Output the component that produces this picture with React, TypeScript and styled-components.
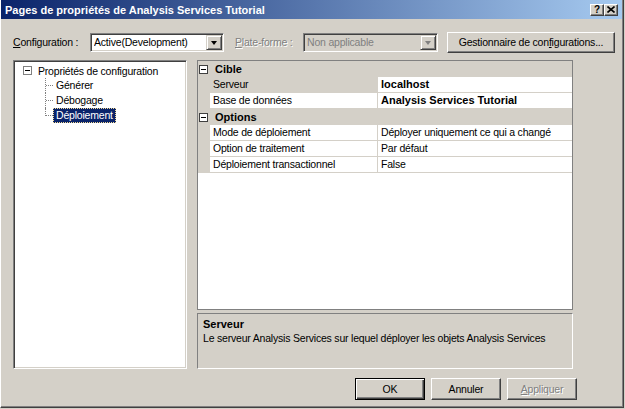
import styled, { createGlobalStyle, css } from "styled-components";

const GlobalStyle = createGlobalStyle`
  html, body {
    margin: 0;
    padding: 0;
    background: #d4d0c8;
  }
  body {
    font-family: "Liberation Sans", Arial, sans-serif;
    font-size: 10.5px;
    letter-spacing: -0.2px;
    color: #000;
  }
  * {
    box-sizing: border-box;
  }
`;

const Window = styled.div`
  width: 624px;
  height: 408px;
  background: #d4d0c8;
  border-left: 1px solid #ffffff;
  border-right: 1px solid #404040;
  border-bottom: 1px solid #404040;
  box-shadow: inset -1px -1px 0 #808080;
  display: flex;
  flex-direction: column;
`;

const TitleBar = styled.div`
  height: 19px;
  margin-right: 1px;
  padding: 0 4px;
  display: flex;
  align-items: center;
  background: linear-gradient(to right, #0a246a, #a6caf0);
`;

const Title = styled.div`
  flex: 1;
  color: #fff;
  font-weight: bold;
  font-size: 11px;
  letter-spacing: 0;
  white-space: nowrap;
`;

const CaptionButton = styled.div`
  width: 14px;
  height: 12px;
  background: #d4d0c8;
  border: 1px solid;
  border-color: #fff #404040 #404040 #fff;
  box-shadow: inset -1px -1px 0 #808080;
  display: flex;
  align-items: center;
  justify-content: center;
  font-weight: bold;
  font-size: 10px;
  letter-spacing: 0;
  line-height: 1;
`;

const Body = styled.div`
  flex: 1;
  padding: 12px 0 0 12px;
  display: flex;
  flex-direction: column;
`;

const ConfigRow = styled.div`
  height: 22px;
  display: flex;
  align-items: center;
`;

const Label = styled.span<{ $width: number; $disabled?: boolean }>`
  width: ${p => p.$width}px;
  flex: none;
  white-space: nowrap;
  ${p => p.$disabled && css`
    color: #808080;
    text-shadow: 1px 1px 0 #fff;
  `}
`;

const Accel = styled.span`
  text-decoration: underline;
`;

const Combo = styled.div<{ $width: number; $disabled?: boolean }>`
  width: ${p => p.$width}px;
  height: 19px;
  flex: none;
  display: flex;
  align-items: center;
  border: 1px solid;
  border-color: #808080 #fff #fff #808080;
  box-shadow: inset 1px 1px 0 #404040, inset -1px -1px 0 #d4d0c8;
  padding: 2px 2px 2px 3px;
  background: ${p => (p.$disabled ? "#d4d0c8" : "#fff")};
  color: ${p => (p.$disabled ? "#808080" : "#000")};
`;

const ComboText = styled.span`
  flex: 1;
  white-space: nowrap;
  overflow: hidden;
`;

const ComboArrow = styled.div<{ $disabled?: boolean }>`
  width: 16px;
  height: 15px;
  flex: none;
  background: #d4d0c8;
  border: 1px solid;
  border-color: #d4d0c8 #404040 #404040 #d4d0c8;
  box-shadow: inset 1px 1px 0 #fff, inset -1px -1px 0 #808080;
  display: flex;
  align-items: center;
  justify-content: center;
  margin-right: -1px;

  &::after {
    content: "";
    width: 0;
    height: 0;
    border-left: 3.5px solid transparent;
    border-right: 3.5px solid transparent;
    border-top: 4px solid ${p => (p.$disabled ? "#808080" : "#000")};
    margin-top: 1px;
  }
`;

const PushButton = styled.button<{ $width: number; $height?: number; $default?: boolean }>`
  width: ${p => p.$width}px;
  height: ${p => p.$height ?? 22}px;
  flex: none;
  padding: 0;
  font: inherit;
  letter-spacing: inherit;
  color: #000;
  background: #d4d0c8;
  border: 1px solid;
  border-color: #fff #404040 #404040 #fff;
  box-shadow: inset -1px -1px 0 #808080;
  white-space: nowrap;
  ${p => p.$default && css`
    border-color: #000;
    box-shadow: inset 1px 1px 0 #fff, inset -1px -1px 0 #404040, inset -2px -2px 0 #808080;
  `}
  &:disabled {
    color: #808080;
    text-shadow: 1px 1px 0 #fff;
  }
`;

const Main = styled.div`
  margin-top: 7px;
  height: 309px;
  display: flex;
  gap: 10px;
`;

const Sunken = styled.div`
  border: 1px solid;
  border-color: #808080 #fff #fff #808080;
  box-shadow: inset 1px 1px 0 #404040, inset -1px -1px 0 #d4d0c8;
`;

const TreeView = styled(Sunken)`
  width: 174px;
  background: #fff;
  padding: 2px;
`;

const TreeRow = styled.div`
  height: 15px;
  display: flex;
  align-items: center;
  padding-left: 7px;
  white-space: nowrap;
`;

const ExpandBox = styled.span<{ $dark?: boolean }>`
  width: 9px;
  height: 9px;
  flex: none;
  border: 1px solid ${p => (p.$dark ? "#404040" : "#808080")};
  background: #fff;
  display: inline-flex;
  align-items: center;
  justify-content: center;

  &::after {
    content: "";
    width: 5px;
    height: 1px;
    background: #000;
  }
`;

const TreeText = styled.span`
  margin-left: 6px;
`;

const ChildGroup = styled.div`
  margin-left: 29px;
`;

const ChildItem = styled.div`
  position: relative;
  height: 15px;
  padding-left: 8px;
  display: flex;
  align-items: center;
  white-space: nowrap;

  &::before {
    content: "";
    position: absolute;
    left: 0;
    top: 0;
    bottom: 0;
    border-left: 1px dotted #808080;
  }
  &:last-child::before {
    bottom: 7px;
  }
  &::after {
    content: "";
    position: absolute;
    left: 1px;
    top: 7px;
    width: 7px;
    border-top: 1px dotted #808080;
  }
`;

const ChildLabel = styled.span<{ $selected?: boolean }>`
  height: 15px;
  line-height: 13px;
  padding: 0 2px;
  border: 1px solid transparent;
  ${p => p.$selected && css`
    background: #0a246a;
    color: #fff;
    border: 1px dotted #f5db95;
  `}
`;

const RightColumn = styled.div`
  width: 376px;
  display: flex;
  flex-direction: column;
  gap: 3px;
`;

const PropertyGrid = styled.div`
  height: 250px;
  background: #fff;
  border: 1px solid #808080;
  display: flex;
  flex-direction: column;
`;

const CategoryRow = styled.div`
  height: 16px;
  flex: none;
  display: flex;
  align-items: center;
  background: #d4d0c8;
  padding-left: 1px;
  font-weight: bold;
  font-size: 11px;
  letter-spacing: 0;
`;

const CategoryText = styled.span`
  margin-left: 7px;
`;

const PropRow = styled.div`
  height: 16px;
  flex: none;
  display: grid;
  grid-template-columns: 12px 168px 1fr;
  border-bottom: 1px solid #d4d0c8;
`;

const Margin = styled.div`
  background: #d4d0c8;
`;

const NameCell = styled.div<{ $selected?: boolean }>`
  padding-left: 3px;
  line-height: 15px;
  white-space: nowrap;
  overflow: hidden;
  border-right: 1px solid #d4d0c8;
  background: ${p => (p.$selected ? "#d4d0c8" : "#fff")};
`;

const ValueCell = styled.div<{ $bold?: boolean }>`
  padding-left: 3px;
  line-height: 15px;
  white-space: nowrap;
  overflow: hidden;
  ${p => p.$bold && css`
    font-weight: bold;
    font-size: 11px;
    letter-spacing: 0;
  `}
`;

const Description = styled.div`
  height: 56px;
  border: 1px solid;
  border-color: #808080 #fff #fff #808080;
  padding: 3px 5px;
  line-height: 14px;
`;

const DescTitle = styled.div`
  font-weight: bold;
  font-size: 11px;
  letter-spacing: 0;
`;

const ButtonRow = styled.div`
  margin-top: 9px;
  width: 564px;
  display: flex;
  justify-content: flex-end;
  gap: 6px;
`;

type Prop = { name: string; value: string; bold?: boolean; selected?: boolean };

const categories: { title: string; props: Prop[] }[] = [
  {
    title: "Cible",
    props: [
      { name: "Serveur", value: "localhost", bold: true, selected: true },
      { name: "Base de données", value: "Analysis Services Tutorial", bold: true },
    ],
  },
  {
    title: "Options",
    props: [
      { name: "Mode de déploiement", value: "Déployer uniquement ce qui a changé" },
      { name: "Option de traitement", value: "Par défaut" },
      { name: "Déploiement transactionnel", value: "False" },
    ],
  },
];

const treeChildren = [
  { label: "Générer" },
  { label: "Débogage" },
  { label: "Déploiement", selected: true },
];

const CloseGlyph = () => (
  <svg width="8" height="7" viewBox="0 0 8 7">
    <path d="M0.5 0.5 L7.5 6.5 M7.5 0.5 L0.5 6.5" stroke="#000" strokeWidth="1.6" />
  </svg>
);

export default function App() {
  return (
    <>
      <GlobalStyle />
      <Window>
        <TitleBar>
          <Title>Pages de propriétés de Analysis Services Tutorial</Title>
          <CaptionButton>?</CaptionButton>
          <CaptionButton>
            <CloseGlyph />
          </CaptionButton>
        </TitleBar>
        <Body>
          <ConfigRow>
            <Label $width={77}>
              <Accel>C</Accel>onfiguration :
            </Label>
            <Combo $width={134}>
              <ComboText>Active(Development)</ComboText>
              <ComboArrow />
            </Combo>
            <Label $width={68} $disabled style={{ marginLeft: 11 }}>
              <Accel>P</Accel>late-forme :
            </Label>
            <Combo $width={135} $disabled>
              <ComboText>Non applicable</ComboText>
              <ComboArrow $disabled />
            </Combo>
            <PushButton $width={168} $height={21} style={{ marginLeft: 9 }}>
              Gestionnaire de con<Accel>f</Accel>igurations...
            </PushButton>
          </ConfigRow>
          <Main>
            <TreeView>
              <TreeRow>
                <ExpandBox />
                <TreeText>Propriétés de configuration</TreeText>
              </TreeRow>
              <ChildGroup>
                {treeChildren.map(child => (
                  <ChildItem key={child.label}>
                    <ChildLabel $selected={child.selected}>{child.label}</ChildLabel>
                  </ChildItem>
                ))}
              </ChildGroup>
            </TreeView>
            <RightColumn>
              <PropertyGrid>
                {categories.map(cat => (
                  <div key={cat.title}>
                    <CategoryRow>
                      <ExpandBox $dark />
                      <CategoryText>{cat.title}</CategoryText>
                    </CategoryRow>
                    {cat.props.map(prop => (
                      <PropRow key={prop.name}>
                        <Margin />
                        <NameCell $selected={prop.selected}>{prop.name}</NameCell>
                        <ValueCell $bold={prop.bold}>{prop.value}</ValueCell>
                      </PropRow>
                    ))}
                  </div>
                ))}
              </PropertyGrid>
              <Description>
                <DescTitle>Serveur</DescTitle>
                <div>Le serveur Analysis Services sur lequel déployer les objets Analysis Services</div>
              </Description>
            </RightColumn>
          </Main>
          <ButtonRow>
            <PushButton $width={70} $default>OK</PushButton>
            <PushButton $width={70}>Annuler</PushButton>
            <PushButton $width={70} disabled>
              <Accel>A</Accel>ppliquer
            </PushButton>
          </ButtonRow>
        </Body>
      </Window>
    </>
  );
}
